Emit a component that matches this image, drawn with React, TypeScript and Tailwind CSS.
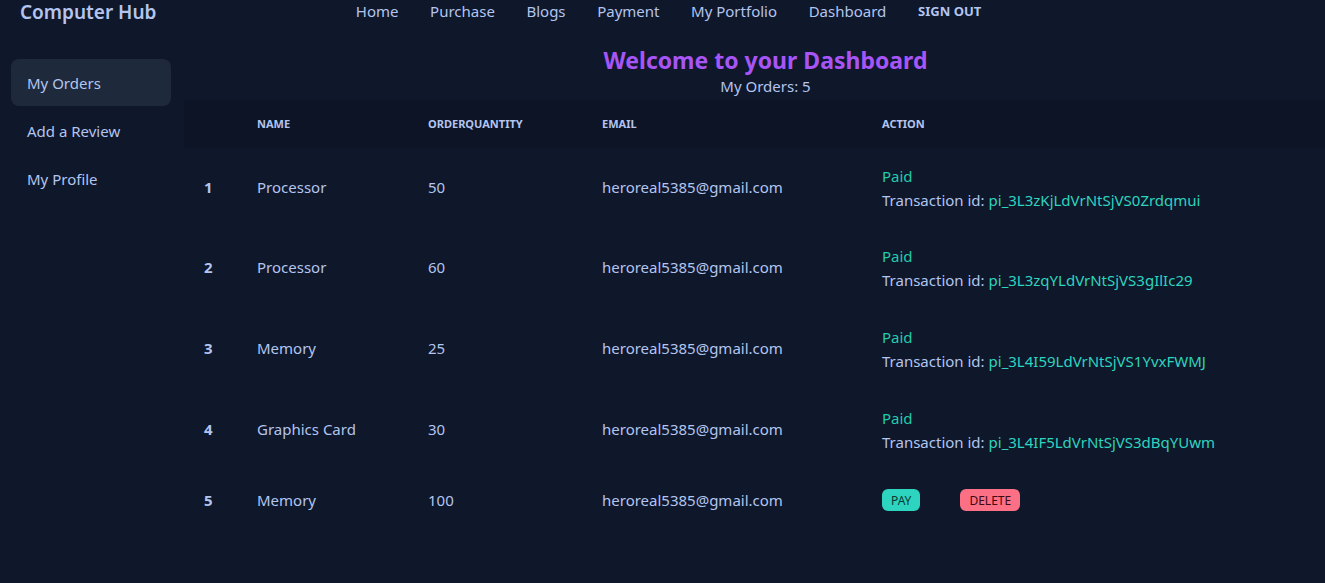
import React from "react";

// Dashboard: My Orders page

type Order = {
  name: string;
  qty: number;
  email: string;
  paid: boolean;
  txn?: string;
};

const ORDERS: Order[] = [
  { name: "Processor", qty: 50, email: "heroreal5385@gmail.com", paid: true, txn: "pi_3L3zKjLdVrNtSjVS0Zrdqmui" },
  { name: "Processor", qty: 60, email: "heroreal5385@gmail.com", paid: true, txn: "pi_3L3zqYLdVrNtSjVS3gIlIc29" },
  { name: "Memory", qty: 25, email: "heroreal5385@gmail.com", paid: true, txn: "pi_3L4I59LdVrNtSjVS1YvxFWMJ" },
  { name: "Graphics Card", qty: 30, email: "heroreal5385@gmail.com", paid: true, txn: "pi_3L4IF5LdVrNtSjVS3dBqYUwm" },
  { name: "Memory", qty: 100, email: "heroreal5385@gmail.com", paid: false },
];

const LINKS = ["Home", "Purchase", "Blogs", "Payment", "My Portfolio", "Dashboard"];

export default function App() {
  return (
    <div
      className="min-h-[583px] w-full overflow-hidden bg-[#0f172a] text-[#b3c5ef]"
      style={{ fontFamily: '"Noto Sans", "Open Sans", sans-serif' }}
    >
      {/* navbar */}
      <header className="flex h-[24px] items-center">
        <div className="w-[340px] pl-5 text-[19px] font-semibold leading-6">Computer Hub</div>
        <nav className="-mt-[2px] flex items-center text-[15px]">
          {LINKS.map((l) => (
            <a key={l} className="px-[15.8px] leading-6">
              {l}
            </a>
          ))}
          <button className="px-4 text-[13px] font-bold uppercase leading-6">Sign out</button>
        </nav>
      </header>

      <div className="flex">
        {/* sidebar */}
        <aside className="w-[182px] shrink-0 px-[11px] pt-[35px] text-[15px]">
          <ul className="flex flex-col gap-[1px]">
            <li className="flex h-[47px] items-center rounded-lg bg-[#1e293b] px-4 pt-[2px]">My Orders</li>
            <li className="flex h-[47px] items-center px-4 pt-[2px]">Add a Review</li>
            <li className="flex h-[47px] items-center px-4 pt-[2px]">My Profile</li>
          </ul>
        </aside>

        {/* main */}
        <main className="min-w-0 flex-1 pl-[2px]">
          <div className="pl-[22px] pt-[20px] text-center">
            <h2 className="text-[23px] font-bold leading-8 text-[#a855f7]">Welcome to your Dashboard</h2>
            <p className="text-[15px] leading-5">My Orders: 5</p>
          </div>

          <table className="mt-[4px] w-[1160px] border-collapse text-left text-[15px]">
            <thead className="bg-[#0d1425] text-[11px] font-bold uppercase">
              <tr className="h-[48px]">
                <th className="w-[57px] pl-5"></th>
                <th className="w-[171px] px-4">Name</th>
                <th className="w-[174px] px-4">OrderQuantity</th>
                <th className="w-[280px] px-4">Email</th>
                <th className="px-4">Action</th>
              </tr>
            </thead>
            <tbody>
              {ORDERS.map((o, i) => (
                <tr key={i} className={o.paid ? (i === 0 ? "h-[79px]" : "h-[81px]") : "h-[60px]"}>
                  <th className="pl-5 font-bold">{i + 1}</th>
                  <td className="px-4">{o.name}</td>
                  <td className="px-4">{o.qty}</td>
                  <td className="px-4">{o.email}</td>
                  <td className="px-4 leading-6">
                    {o.paid ? (
                      <div>
                        <p className="text-[#22ccaa]">Paid</p>
                        <p>
                          Transaction id: <span className="text-[#2dd4bf]">{o.txn}</span>
                        </p>
                      </div>
                    ) : (
                      <div className="flex items-center gap-10">
                        <button className="h-[22px] rounded-md bg-[#2dd4bf] px-[9px] text-[12px] uppercase text-[#0b3a36]">
                          Pay
                        </button>
                        <button className="h-[22px] rounded-md bg-[#fb7085] px-[9px] text-[12px] uppercase text-[#3b0a12]">
                          Delete
                        </button>
                      </div>
                    )}
                  </td>
                </tr>
              ))}
            </tbody>
          </table>
        </main>
      </div>
    </div>
  );
}
